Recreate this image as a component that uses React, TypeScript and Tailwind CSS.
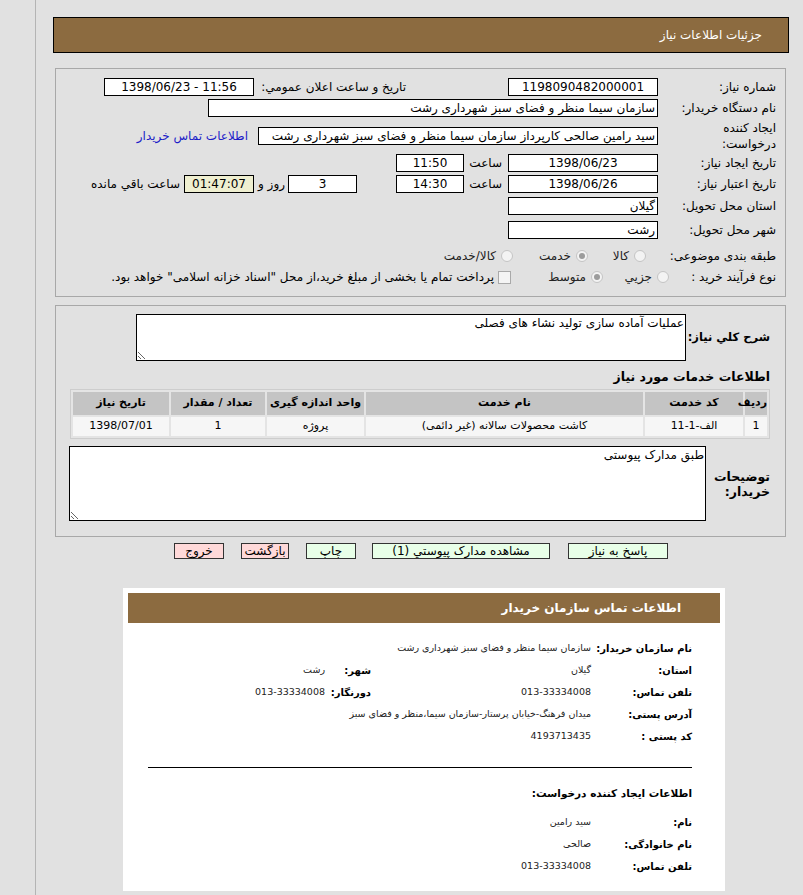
import React from "react";

type InpProps = {
  w: string;
  children?: React.ReactNode;
  center?: boolean;
  bg?: string;
  ltr?: boolean;
};

function Inp({ w, children, center, bg = "bg-white", ltr }: InpProps) {
  return (
    <div
      className={`${w} ${bg} h-[18px] shrink-0 border border-black flex items-center ${
        center ? "justify-center" : "pr-[2px]"
      } overflow-hidden whitespace-nowrap text-[12px] leading-none`}
    >
      <span dir={ltr ? "ltr" : undefined}>{children}</span>
    </div>
  );
}

function Radio({ checked }: { checked?: boolean }) {
  return (
    <span className="inline-flex w-[12px] h-[12px] shrink-0 rounded-full border border-[#c4c4c4] bg-[#f3f3f3] items-center justify-center">
      {checked && <span className="w-[6px] h-[6px] rounded-full bg-[#9c9c9c]" />}
    </span>
  );
}

function Opt({ w, checked, label, extra = "" }: { w: string; checked?: boolean; label: string; extra?: string }) {
  return (
    <div className={`${w} ${extra} shrink-0 flex items-center gap-[5px] whitespace-nowrap`}>
      <Radio checked={checked} />
      <span className="text-[#222]">{label}</span>
    </div>
  );
}

function CardRow({ label, value, label2, value2 }: { label: string; value: string; label2?: string; value2?: string }) {
  return (
    <div className="flex items-center h-[22px] whitespace-nowrap">
      <div className="w-[101px] shrink-0 font-bold text-[10px]">{label}</div>
      <div className="w-[220px] shrink-0 text-[9.5px] text-[#222]">{value}</div>
      {label2 && <div className="w-[46px] shrink-0 font-bold text-[10px]">{label2}</div>}
      {value2 && <div className="text-[9.5px] text-[#222]">{value2}</div>}
    </div>
  );
}

export default function App() {
  return (
    <div className="min-h-[895px] bg-[#e1e1e1] pl-[35px] font-['DejaVu_Sans',sans-serif] text-[12px] text-black">
      <div dir="rtl" className="min-h-[895px] border-l border-[#b4b4b4] pt-[17px]">
        {/* header */}
        <div className="mr-[14px] w-[736px] h-[36px] bg-[#8c6b40] border border-black flex items-center pr-[26px] text-white text-[12px]">
          جزئیات اطلاعات نیاز
        </div>

        {/* panel 1 */}
        <div className="mt-[15px] mr-[17px] w-[731px] h-[229px] border border-[#a8a8a8] pr-[9px] pt-[8px]">
          <div className="flex items-center h-[20px]">
            <div className="w-[118px] shrink-0">شماره نیاز:</div>
            <Inp w="w-[150px]" center>
              1198090482000001
            </Inp>
            <div className="w-[254px] shrink-0 pr-[102px] whitespace-nowrap">تاریخ و ساعت اعلان عمومي:</div>
            <Inp w="w-[150px]" center ltr>
              1398/06/23 - 11:56
            </Inp>
          </div>

          <div className="flex items-center h-[22px]">
            <div className="w-[118px] shrink-0">نام دستگاه خریدار:</div>
            <Inp w="w-[450px]">سازمان سیما منظر و فضای سبز شهرداری رشت</Inp>
          </div>

          <div className="flex items-center h-[34px]">
            <div className="w-[118px] shrink-0 leading-[16px]">
              ایجاد کننده
              <br />
              درخواست:
            </div>
            <Inp w="w-[400px]">سید رامین صالحی کارپرداز سازمان سیما منظر و فضای سبز شهرداری رشت</Inp>
            <div className="mr-[10px] text-[#1c1cc8] whitespace-nowrap">اطلاعات تماس خریدار</div>
          </div>

          <div className="flex items-center h-[20px]">
            <div className="w-[118px] shrink-0">تاریخ ایجاد نیاز:</div>
            <Inp w="w-[150px]" center>
              1398/06/23
            </Inp>
            <div className="w-[44px] shrink-0 pr-[6px]">ساعت</div>
            <Inp w="w-[68px]" center>
              11:50
            </Inp>
          </div>

          <div className="flex items-center h-[22px]">
            <div className="w-[118px] shrink-0">تاریخ اعتبار نیاز:</div>
            <Inp w="w-[150px]" center>
              1398/06/26
            </Inp>
            <div className="w-[44px] shrink-0 pr-[6px]">ساعت</div>
            <Inp w="w-[68px]" center>
              14:30
            </Inp>
            <div className="w-[39px] shrink-0" />
            <Inp w="w-[69px]" center>
              3
            </Inp>
            <div className="w-[34px] shrink-0 pr-[3px] whitespace-nowrap">روز و</div>
            <Inp w="w-[70px]" center bg="bg-[#efefd0]">
              01:47:07
            </Inp>
            <div className="pr-[4px] whitespace-nowrap">ساعت باقي مانده</div>
          </div>

          <div className="flex items-center h-[22px]">
            <div className="w-[118px] shrink-0">استان محل تحویل:</div>
            <Inp w="w-[150px]">گیلان</Inp>
          </div>

          <div className="flex items-center h-[26px]">
            <div className="w-[118px] shrink-0">شهر محل تحویل:</div>
            <Inp w="w-[150px]">رشت</Inp>
          </div>

          <div className="flex items-center h-[26px]">
            <div className="w-[118px] shrink-0">طبقه بندی موضوعی:</div>
            <Opt w="w-[70px]" extra="pr-[12px]" label="کالا" />
            <Opt w="w-[75px]" checked label="خدمت" />
            <Opt w="w-[80px]" label="کالا/خدمت" />
          </div>

          <div className="flex items-center h-[16px]">
            <div className="w-[106px] shrink-0">نوع فرآیند خرید :</div>
            <Opt w="w-[67px]" extra="pr-[1px]" label="جزيي" />
            <Opt w="w-[92px]" checked label="متوسط" />
            <div className="flex items-center gap-[4px] whitespace-nowrap">
              <span className="w-[13px] h-[13px] shrink-0 border border-[#a9a9a9] bg-[#f4f4f4]" />
              <span>پرداخت تمام یا بخشی از مبلغ خرید،از محل "اسناد خزانه اسلامی" خواهد بود.</span>
            </div>
          </div>
        </div>

        {/* panel 2 */}
        <div className="mt-[8px] mr-[17px] w-[731px] h-[232px] border border-[#a8a8a8] pr-[15px] pt-[8px]">
          <div className="flex items-center">
            <div className="w-[84px] shrink-0 font-bold text-[11.5px] whitespace-nowrap">شرح کلي نیاز:</div>
            <textarea
              readOnly
              defaultValue="عملیات آماده سازی تولید نشاء های فصلی"
              className="w-[550px] h-[47px] shrink-0 border border-black bg-white text-[12px] leading-[15px] px-[1px] py-[1px] outline-none"
            />
          </div>

          <div className="mt-[7px] h-[18px] leading-[18px] font-bold text-[12.5px]">اطلاعات خدمات مورد نیاز</div>

          <table className="mt-[3px] w-[700px] table-fixed border-separate border-spacing-[2px] border border-[#cdcdcd] bg-[#e4e4e4]">
            <colgroup>
              <col className="w-[22px]" />
              <col className="w-[98px]" />
              <col className="w-[277px]" />
              <col className="w-[97px]" />
              <col className="w-[94px]" />
              <col className="w-[96px]" />
            </colgroup>
            <thead>
              <tr className="h-[23px] bg-[#c4c4c4] text-[11px] font-bold">
                <th className="p-0 font-bold">ردیف</th>
                <th className="p-0 font-bold">کد خدمت</th>
                <th className="p-0 font-bold">نام خدمت</th>
                <th className="p-0 font-bold">واحد اندازه گیری</th>
                <th className="p-0 font-bold">تعداد / مقدار</th>
                <th className="p-0 font-bold">تاریخ نیاز</th>
              </tr>
            </thead>
            <tbody>
              <tr className="h-[19px] bg-[#f6f6f6] text-[11px] text-center">
                <td className="p-0">1</td>
                <td className="p-0">الف-1-11</td>
                <td className="p-0">کاشت محصولات سالانه (غیر دائمی)</td>
                <td className="p-0">پروژه</td>
                <td className="p-0">1</td>
                <td className="p-0">1398/07/01</td>
              </tr>
            </tbody>
          </table>

          <div className="mt-[7px] flex items-center">
            <div className="w-[64px] shrink-0 font-bold text-[12.5px] leading-[15px]">
              توضیحات
              <br />
              خریدار:
            </div>
            <textarea
              readOnly
              defaultValue="طبق مدارک پیوستی"
              className="w-[637px] h-[75px] shrink-0 border border-black bg-white text-[12px] leading-[15px] px-[1px] py-[1px] outline-none"
            />
          </div>
        </div>

        {/* buttons */}
        <div className="mt-[6px] flex pr-[135px] text-[12px]">
          <div className="w-[100px] h-[16px] border border-[#333] bg-[#e8ffe8] flex items-center justify-center leading-none whitespace-nowrap">
            پاسخ به نیاز
          </div>
          <div className="mr-[18px] w-[178px] h-[16px] border border-[#333] bg-[#e8ffe8] flex items-center justify-center leading-none whitespace-nowrap">
            مشاهده مدارک پیوستي (1)
          </div>
          <div className="mr-[16px] w-[50px] h-[16px] border border-[#333] bg-[#e8ffe8] flex items-center justify-center leading-none whitespace-nowrap">
            چاپ
          </div>
          <div className="mr-[17px] w-[48px] h-[16px] border border-[#333] bg-[#ffd9d9] flex items-center justify-center leading-none whitespace-nowrap">
            بازگشت
          </div>
          <div className="mr-[17px] w-[50px] h-[16px] border border-[#333] bg-[#ffd9d9] flex items-center justify-center leading-none whitespace-nowrap">
            خروج
          </div>
        </div>

        {/* card */}
        <div className="mt-[29px] mr-[78px] w-[602px] bg-white p-[5px]">
          <div className="h-[30px] bg-[#8c6b40] flex items-center pr-[39px] text-white font-bold text-[12px]">
            اطلاعات تماس سازمان خریدار
          </div>
          <div className="pr-[28px] pl-[20px] pb-[9px]">
            <div className="mt-[14px]">
              <CardRow label="نام سازمان خریدار:" value="سازمان سیما منظر و فضای سبز شهرداری رشت" />
              <CardRow label="استان:" value="گیلان" label2="شهر:" value2="رشت" />
              <CardRow label="تلفن تماس:" value="013-33334008" label2="دورنگار:" value2="013-33334008" />
              <CardRow label="آدرس پستی:" value="میدان فرهنگ-خیابان پرستار-سازمان سیما،منظر و فضای سبز" />
              <CardRow label="کد پستی :" value="4193713435" />
            </div>
            <div className="mt-[20px] border-t border-black" />
            <div className="mt-[16px] h-[18px] leading-[18px] font-bold text-[10.5px]">اطلاعات ایجاد کننده درخواست:</div>
            <div className="mt-[9px]">
              <CardRow label="نام:" value="سید رامین" />
              <CardRow label="نام خانوادگی:" value="صالحی" />
              <CardRow label="تلفن تماس:" value="013-33334008" />
            </div>
          </div>
        </div>
      </div>
    </div>
  );
}
